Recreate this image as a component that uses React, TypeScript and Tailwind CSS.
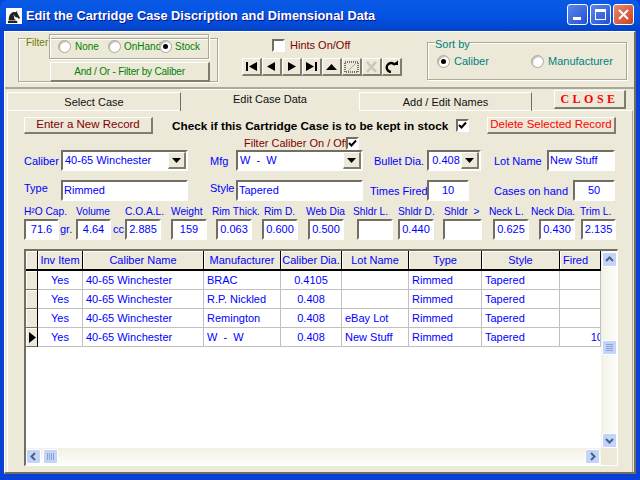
import React from 'react';
import { GiChessKnight } from 'react-icons/gi';

const raised = 'border-t border-l border-r-2 border-b-2 border-t-white border-l-white border-r-[#807d6e] border-b-[#807d6e] bg-[#ece9d8]';
const sunken = 'border-2 border-t-[#716f64] border-l-[#716f64] border-r-white border-b-white bg-white';
const groove = 'border border-[#aca899] shadow-[1px_1px_0_#ffffff,inset_1px_1px_0_#ffffff]';
const blue = 'text-[#0000ff]';

const Radio = ({ on }: { on?: boolean }) => (
  <span className="w-[13px] h-[13px] shrink-0 rounded-full bg-white border border-[#aca899] shadow-[inset_1px_1px_1px_#b5b2a5] flex items-center justify-center">
    {on && <span className="w-[5px] h-[5px] rounded-full bg-black" />}
  </span>
);

const Check = ({ on }: { on?: boolean }) => (
  <span className={`w-[13px] h-[13px] shrink-0 flex items-center justify-center ${sunken}`}>
    {on && (
      <svg width="9" height="9" viewBox="0 0 9 9">
        <path d="M1 4 L3.5 6.5 L8 1.5" fill="none" stroke="#000" strokeWidth="2" />
      </svg>
    )}
  </span>
);

const Arrow = () => (
  <span className={`w-[18px] shrink-0 flex items-center justify-center ${raised}`}>
    <svg width="9" height="5" viewBox="0 0 9 5"><path d="M0 0 H9 L4.5 5 Z" fill="#000" /></svg>
  </span>
);

const Combo = ({ value, w, center }: { value: string; w: string; center?: boolean }) => (
  <div className={`h-[21px] flex ${w} ${sunken} ${blue}`}>
    <span className={`flex-1 whitespace-pre overflow-hidden pl-[2px] leading-[16px] ${center ? 'text-center' : ''}`}>{value}</span>
    <Arrow />
  </div>
);

const Field = ({ value, w, center }: { value?: string; w: string; center?: boolean }) => (
  <div className={`h-[21px] shrink-0 px-[1px] leading-[17px] whitespace-nowrap overflow-hidden ${w} ${sunken} ${blue} ${center ? 'text-center' : ''}`}>
    {value}
  </div>
);

const navIcons = [
  <path key="a" d="M2 2 H4 V11 H2 Z M13 2 V11 L5 6.5 Z" />,
  <path key="b" d="M11 2 V11 L3 6.5 Z" />,
  <path key="c" d="M4 2 V11 L12 6.5 Z" />,
  <path key="d" d="M11 2 H13 V11 H11 Z M2 2 V11 L10 6.5 Z" />,
  <path key="e" d="M2 10 H13 L7.5 4 Z" />,
  <g key="f" fill="none">
    <rect x="1" y="2" width="13" height="10" stroke="#000" strokeDasharray="1 1" />
    <path d="M4 11 L12 3" stroke="#aca899" />
  </g>,
  <path key="g" d="M3 2 L12 12 M12 2 L3 12" stroke="#c9c6b8" strokeWidth="2.5" fill="none" />,
  <g key="h">
    <path d="M11 5 A4.5 4.5 0 1 0 7 12" fill="none" stroke="#000" strokeWidth="2.4" />
    <path d="M8 5 H14 V0.5 Z" />
  </g>,
];

const Cap = ({ children }: { children: React.ReactNode }) => (
  <div className={`h-[20px] flex items-center justify-center whitespace-nowrap overflow-hidden bg-[#ece9d8] border-r border-b-2 border-r-black border-b-black shadow-[inset_1px_1px_0_#ffffff] ${blue}`}>
    {children}
  </div>
);

const rows = [
  { mfg: 'BRAC', dia: '0.4105', lot: '', fired: '' },
  { mfg: 'R.P. Nickled', dia: '0.408', lot: '', fired: '' },
  { mfg: 'Remington', dia: '0.408', lot: 'eBay Lot', fired: '' },
  { mfg: 'W  -  W', dia: '0.408', lot: 'New Stuff', fired: '10', current: true },
];

const cell = `h-[19px] leading-[18px] whitespace-pre overflow-hidden border-r border-b border-[#c0c0c0] px-[3px] ${blue}`;

const ScrollBtn = ({ d }: { d: string }) => (
  <span className="w-[15px] h-[15px] shrink-0 rounded-[2px] border border-white bg-[#c3d4fb] flex items-center justify-center">
    <svg width="9" height="9" viewBox="0 0 9 9"><path d={d} fill="none" stroke="#4d6185" strokeWidth="2" /></svg>
  </span>
);

export default function App() {
  return (
    <div className="w-[640px] h-[480px] flex flex-col overflow-hidden bg-[#0a3fd8] text-[11px] font-['Liberation_Sans',sans-serif]">
      {/* title bar */}
      <div className="h-[31px] shrink-0 flex items-center pl-[6px] pr-[6px] rounded-t-[7px] bg-gradient-to-b from-[#0a5ae6] via-[#0454e4] to-[#0342c8]">
        <span className="w-[16px] h-[16px] bg-white flex items-center justify-center">
          <GiChessKnight className="text-[#222] w-[16px] h-[16px]" />
        </span>
        <span className="ml-[4px] flex-1 text-white font-bold text-[12.8px] whitespace-nowrap [text-shadow:1px_1px_0_#0f1089]">
          Edit the Cartridge Case Discription and Dimensional Data
        </span>
        <div className="flex gap-[2px] -mt-[3px]">
          <span className="w-[21px] h-[21px] rounded-[3px] border border-white bg-gradient-to-br from-[#5d86ef] to-[#2350d0] flex items-end pl-[5px] pb-[4px]">
            <span className="w-[8px] h-[3px] bg-white" />
          </span>
          <span className="w-[21px] h-[21px] rounded-[3px] border border-white bg-gradient-to-br from-[#5d86ef] to-[#2350d0] flex items-center justify-center">
            <span className="w-[11px] h-[11px] border border-t-[3px] border-white" />
          </span>
          <span className="w-[21px] h-[21px] rounded-[3px] border border-white bg-gradient-to-br from-[#e9886c] to-[#c8401a] flex items-center justify-center">
            <svg width="11" height="11" viewBox="0 0 11 11"><path d="M1 1 L10 10 M10 1 L1 10" stroke="#fff" strokeWidth="2" /></svg>
          </span>
        </div>
      </div>

      <div className="flex-1 min-h-0 flex px-[4px] pb-[6px]">
        <div className="flex-1 flex flex-col bg-[#ece9d8] border-t border-l border-r-2 border-b-2 border-t-white border-l-white border-r-[#716f64] border-b-[#716f64]">
          {/* top strip */}
          <div className="h-[57px] shrink-0 flex border-b-2 border-b-[#aca899] pl-[13px]">
            <div className={`relative mt-[6px] w-[200px] h-[44px] ${groove}`}>
              <span className="absolute left-[7px] -top-[2px] z-10 bg-[#ece9d8] text-[10px] text-[#6b8000] leading-[11px]">Filter</span>
              <div className={`-mt-[5px] ml-[30px] w-[160px] h-[25px] flex items-center pl-[8px] text-[10px] text-[#008000] whitespace-nowrap ${groove}`}>
                <Radio /><span className="ml-[4px] w-[33px]">None</span>
                <Radio /><span className="ml-[3px] w-[35px]">OnHand</span>
                <Radio on /><span className="ml-[3px]">Stock</span>
              </div>
              <div className={`mt-[3px] ml-[31px] w-[160px] h-[20px] flex items-center justify-center text-[10px] tracking-[-0.2px] text-[#008000] ${raised}`}>
                And / Or - Filter by Caliber
              </div>
            </div>

            <div className="ml-[24px] w-[160px] shrink-0">
              <div className="mt-[7px] pl-[30px] flex items-center h-[13px] text-[#800000]">
                <Check /><span className="ml-[5px] whitespace-nowrap">Hints On/Off</span>
              </div>
              <div className="mt-[6px] flex">
                {navIcons.map((icon, i) => (
                  <span key={i} className={`w-[20px] h-[18px] flex items-center justify-center ${raised}`}>
                    <svg width="15" height="13" viewBox="0 0 15 13" fill="#000">{icon}</svg>
                  </span>
                ))}
              </div>
            </div>

            <div className={`relative ml-[25px] mt-[10px] w-[200px] h-[38px] flex items-center pl-[9px] text-[#008080] ${groove}`}>
              <span className="absolute left-[7px] -top-[5px] bg-[#ece9d8] leading-[12px]">Sort by</span>
              <Radio on /><span className="ml-[4px] w-[77px]">Caliber</span>
              <Radio /><span className="ml-[4px]">Manufacturer</span>
            </div>
          </div>

          {/* tabs */}
          <div className="h-[22px] shrink-0 flex items-end pl-[2px] relative z-10 -mb-[1px] text-[#111]">
            <div className="w-[174px] h-[19px] flex items-center justify-center border-t border-l border-r border-t-white border-l-white border-r-[#716f64]">Select Case</div>
            <div className="w-[178px] h-[22px] pb-[3px] flex items-center justify-center bg-[#ece9d8] border-t border-t-white">Edit Case Data</div>
            <div className="w-[173px] h-[19px] flex items-center justify-center border-t border-l border-r border-t-white border-l-white border-r-[#716f64]">Add / Edit Names</div>
            <div className={`ml-[22px] mb-[2px] w-[72px] h-[19px] flex items-center justify-center text-[#ff0000] font-bold text-[12px] tracking-[3.5px] font-['Liberation_Serif',serif] ${raised}`}>CLOSE</div>
          </div>

          {/* edit panel */}
          <div className="flex-1 min-h-0 ml-[2px] mr-[1px] border-t border-l border-r border-t-white border-l-white border-r-[#aca899] pl-[16px] flex flex-col">
            <div className="mt-[6px] h-[17px] flex items-center">
              <div className={`w-[129px] h-[17px] flex items-center justify-center whitespace-nowrap text-[#800000] text-[11.5px] ${raised}`}>Enter a New Record</div>
              <span className="ml-[19px] w-[284px] font-bold text-[11.75px] text-black whitespace-nowrap">Check if this Cartridge Case is to be kept in stock</span>
              <Check on />
              <div className={`ml-[18px] w-[129px] h-[17px] flex items-center justify-center whitespace-nowrap text-[#ff0000] text-[11.5px] ${raised}`}>Delete Selected Record</div>
            </div>

            <div className="mt-[2px] h-[14px] flex items-center text-[#800000] pl-[220px]">
              <span className="w-[102px] whitespace-nowrap">Filter Caliber On / Off</span>
              <Check on />
            </div>

            <div className="h-[21px] flex items-center">
              <span className={`w-[37px] mt-[2px] ${blue}`}>Caliber</span>
              <Combo value="40-65 Winchester" w="w-[127px]" />
              <span className={`ml-[22px] w-[26px] mt-[2px] ${blue}`}>Mfg</span>
              <Combo value="W  -  W" w="w-[127px]" />
              <span className={`ml-[11px] w-[53px] mt-[2px] whitespace-nowrap ${blue}`}>Bullet Dia.</span>
              <Combo value="0.408" w="w-[54px]" center />
              <span className={`ml-[13px] w-[53px] mt-[2px] whitespace-nowrap ${blue}`}>Lot Name</span>
              <Field value="New Stuff" w="w-[68px]" />
            </div>

            <div className="mt-[9px] h-[21px] flex items-center">
              <span className={`w-[37px] -mt-[4px] ${blue}`}>Type</span>
              <Field value="Rimmed" w="w-[127px]" />
              <span className={`ml-[22px] w-[26px] -mt-[4px] ${blue}`}>Style</span>
              <Field value="Tapered" w="w-[127px]" />
              <span className={`ml-[7px] w-[57px] mt-[2px] whitespace-nowrap ${blue}`}>Times Fired</span>
              <Field value="10" w="w-[42px]" center />
              <span className={`ml-[25px] w-[79px] mt-[2px] whitespace-nowrap ${blue}`}>Cases on hand</span>
              <Field value="50" w="w-[42px]" center />
            </div>

            <div className={`mt-[3px] h-[14px] flex whitespace-nowrap text-[10.2px] ${blue}`}>
              <span className="w-[52px]">H²O Cap.</span>
              <span className="w-[49px]">Volume</span>
              <span className="w-[46px]">C.O.A.L.</span>
              <span className="w-[41px]">Weight</span>
              <span className="w-[52px]">Rim Thick.</span>
              <span className="w-[42px]">Rim D.</span>
              <span className="w-[47px]">Web Dia</span>
              <span className="w-[45px]">Shldr L.</span>
              <span className="w-[46px]">Shldr D.</span>
              <span className="w-[45px] whitespace-pre">Shldr  &gt;</span>
              <span className="w-[42px]">Neck L.</span>
              <span className="w-[49px]">Neck Dia.</span>
              <span>Trim L.</span>
            </div>

            <div className="mt-[1px] h-[21px] flex items-center">
              <Field value="71.6" w="w-[35px]" center />
              <span className={`w-[17px] pl-[1px] ${blue}`}>gr.</span>
              <Field value="4.64" w="w-[35px]" center />
              <span className={`w-[14px] pl-[2px] ${blue}`}>cc</span>
              <Field value="2.885" w="w-[36px]" center />
              <Field value="159" w="w-[36px] ml-[10px]" center />
              <Field value="0.063" w="w-[36px] ml-[9px]" center />
              <Field value="0.600" w="w-[36px] ml-[10px]" center />
              <Field value="0.500" w="w-[36px] ml-[10px]" center />
              <Field w="w-[36px] ml-[13px]" />
              <Field value="0.440" w="w-[36px] ml-[5px]" center />
              <Field w="w-[39px] ml-[9px]" />
              <Field value="0.625" w="w-[36px] ml-[11px]" center />
              <Field value="0.430" w="w-[36px] ml-[10px]" center />
              <Field value="2.135" w="w-[35px] ml-[6px]" center />
            </div>

            {/* data grid */}
            <div className="mt-[9px] w-[594px] h-[217px] flex flex-col border-t-2 border-l-2 border-r border-b border-t-[#716f64] border-l-[#716f64] border-r-white border-b-white bg-white">
              <div className="flex-1 min-h-0 flex">
                <div className="w-[575px] shrink-0">
                  <div className="grid grid-cols-[12px_45px_121px_77px_61px_67px_73px_78px_41px]">
                    <Cap>{''}</Cap>
                    <Cap>Inv Item</Cap>
                    <Cap>Caliber Name</Cap>
                    <Cap>Manufacturer</Cap>
                    <Cap>Caliber Dia.</Cap>
                    <Cap>Lot Name</Cap>
                    <Cap>Type</Cap>
                    <Cap>Style</Cap>
                    <Cap><span className="w-full pl-[3px]">Fired</span></Cap>
                    {rows.map((r, i) => (
                      <React.Fragment key={i}>
                        <div className="h-[19px] bg-[#ece9d8] border-r border-b border-r-black border-b-[#716f64] shadow-[inset_1px_1px_0_#ffffff] flex items-center">
                          {r.current && (
                            <svg width="8" height="11" viewBox="0 0 8 11" className="ml-[3px]"><path d="M0 0 L7 5.5 L0 11 Z" fill="#000" /></svg>
                          )}
                        </div>
                        <div className={`${cell} text-center`}>Yes</div>
                        <div className={cell}>40-65 Winchester</div>
                        <div className={cell}>{r.mfg}</div>
                        <div className={`${cell} text-center`}>{r.dia}</div>
                        <div className={cell}>{r.lot}</div>
                        <div className={cell}>Rimmed</div>
                        <div className={cell}>Tapered</div>
                        <div className={`${cell} flex justify-end`}><span className="-mr-[6px]">{r.fired}</span></div>
                      </React.Fragment>
                    ))}
                  </div>
                </div>
                <div className="flex-1 flex flex-col items-center bg-gradient-to-r from-[#f3f1e6] to-[#fdfdfa]">
                  <span className="mt-[1px]"><ScrollBtn d="M1 6 L4.5 2.5 L8 6" /></span>
                  <span className="mt-[73px] w-[15px] h-[15px] rounded-[2px] border border-white bg-[#c3d4fb] flex flex-col items-center justify-center gap-[1px]">
                    <span className="w-[7px] h-[1px] bg-[#8da3d4]" />
                    <span className="w-[7px] h-[1px] bg-[#8da3d4]" />
                    <span className="w-[7px] h-[1px] bg-[#8da3d4]" />
                    <span className="w-[7px] h-[1px] bg-[#8da3d4]" />
                  </span>
                  <span className="mt-auto"><ScrollBtn d="M1 3 L4.5 6.5 L8 3" /></span>
                </div>
              </div>
              <div className="h-[17px] shrink-0 flex">
                <div className="w-[575px] shrink-0 flex items-center pr-[1px] bg-gradient-to-b from-[#f3f1e6] to-[#fdfdfa]">
                  <ScrollBtn d="M6 1 L2.5 4.5 L6 8" />
                  <span className="ml-[2px] w-[15px] h-[15px] rounded-[2px] border border-white bg-[#c3d4fb] flex items-center justify-center gap-[1px]">
                    <span className="w-[1px] h-[7px] bg-[#8da3d4]" />
                    <span className="w-[1px] h-[7px] bg-[#8da3d4]" />
                    <span className="w-[1px] h-[7px] bg-[#8da3d4]" />
                    <span className="w-[1px] h-[7px] bg-[#8da3d4]" />
                  </span>
                  <span className="ml-auto"><ScrollBtn d="M3 1 L6.5 4.5 L3 8" /></span>
                </div>
                <div className="flex-1 bg-[#ece9d8]" />
              </div>
            </div>
          </div>
        </div>
      </div>
    </div>
  );
}
